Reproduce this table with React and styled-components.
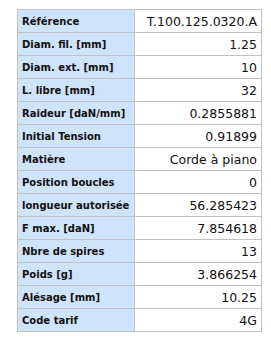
import React from "react";
import styled, { createGlobalStyle } from "styled-components";

const GlobalStyle = createGlobalStyle`
    body {
        margin: 0;
        background: #ffffff;
        font-family: "DejaVu Sans", Verdana, sans-serif;
    }
`;

const Wrapper = styled.div`
    padding: 9px 0 0 17px;
`;

const Table = styled.table`
    border-collapse: collapse;
    width: 245px;
    table-layout: fixed;
`;

const Row = styled.tr`
    height: 23px;
`;

const Label = styled.td`
    width: 117px;
    box-sizing: border-box;
    background: #cfe3fb;
    border: 1px solid #c2c2c2;
    padding: 0 4px;
    font-size: 10px;
    font-weight: bold;
    color: #111111;
    white-space: nowrap;
    vertical-align: middle;
`;

const Value = styled.td`
    border: 1px solid #c2c2c2;
    padding: 0 4px;
    font-size: 12.5px;
    color: #111111;
    text-align: right;
    white-space: nowrap;
    vertical-align: middle;
`;

const rows = [
    ["Référence", "T.100.125.0320.A"],
    ["Diam. fil. [mm]", "1.25"],
    ["Diam. ext. [mm]", "10"],
    ["L. libre [mm]", "32"],
    ["Raideur [daN/mm]", "0.2855881"],
    ["Initial Tension", "0.91899"],
    ["Matière", "Corde à piano"],
    ["Position boucles", "0"],
    ["longueur autorisée", "56.285423"],
    ["F max. [daN]", "7.854618"],
    ["Nbre de spires", "13"],
    ["Poids [g]", "3.866254"],
    ["Alésage [mm]", "10.25"],
    ["Code tarif", "4G"],
];

const App = () => (
    <Wrapper>
        <GlobalStyle />
        <Table>
            <tbody>
                {rows.map(([label, value]) => (
                    <Row key={label}>
                        <Label>{label}</Label>
                        <Value>{value}</Value>
                    </Row>
                ))}
            </tbody>
        </Table>
    </Wrapper>
);

export default App;
